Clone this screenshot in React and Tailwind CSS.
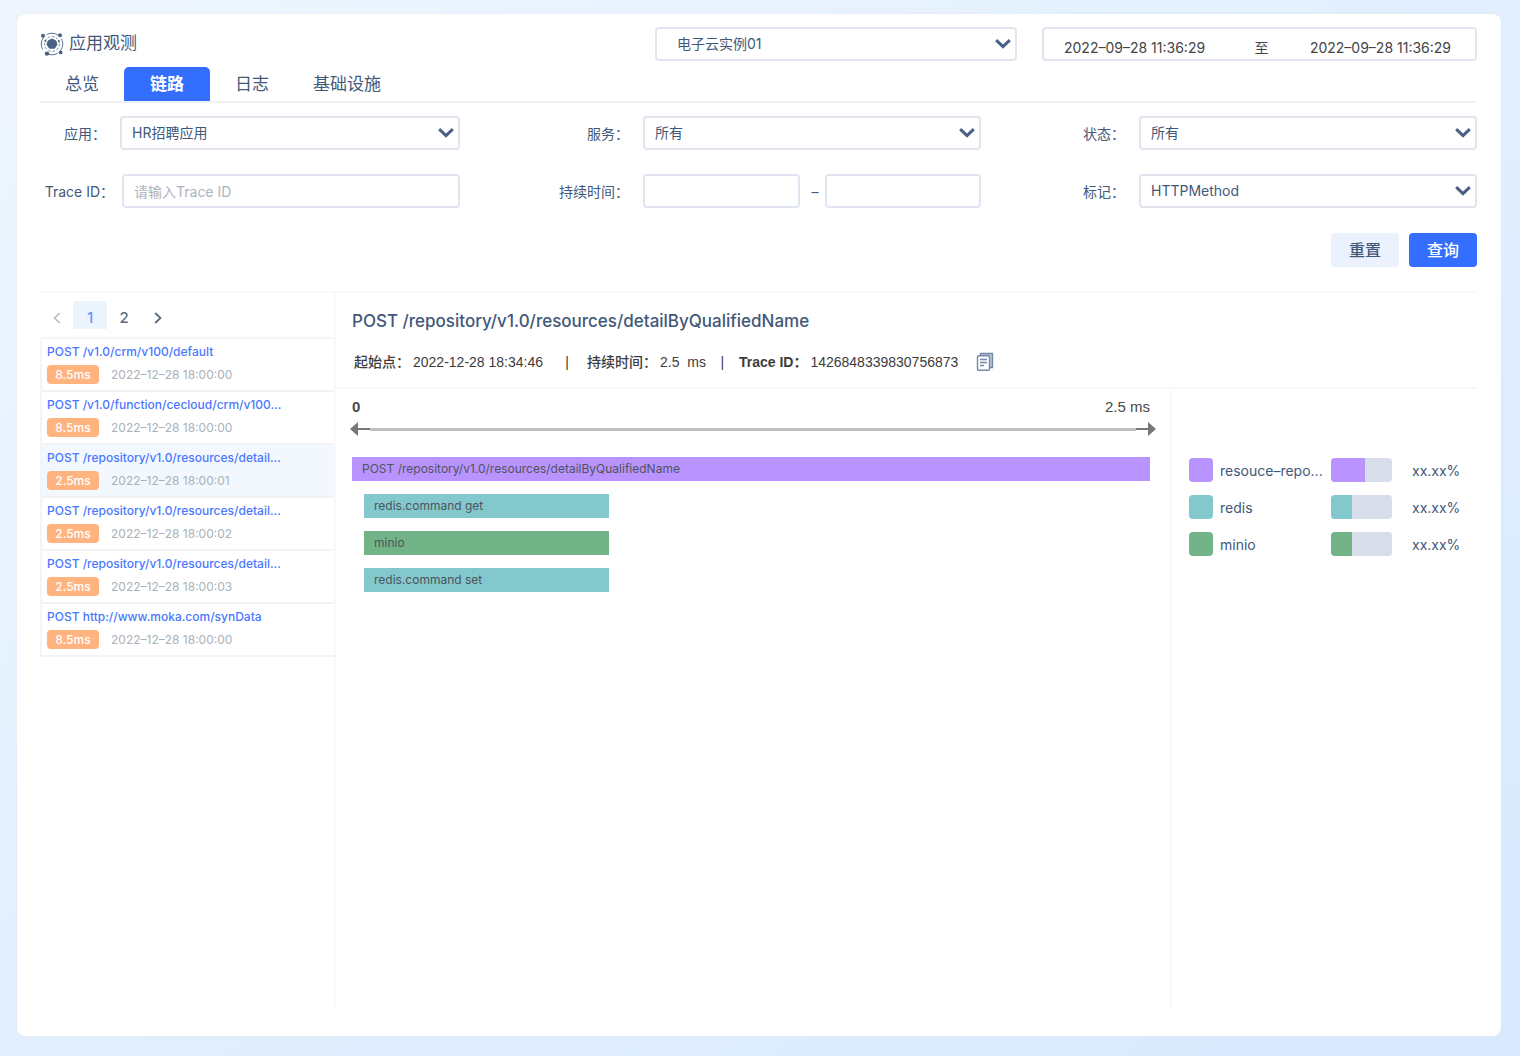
import React from "react";

const traces = [
  { id: 1, name: "POST /v1.0/crm/v100/default", cost: "8.5ms", time: "2022–12–28 18:00:00" },
  { id: 2, name: "POST /v1.0/function/cecloud/crm/v100...", cost: "8.5ms", time: "2022–12–28 18:00:00" },
  { id: 3, name: "POST /repository/v1.0/resources/detail...", cost: "2.5ms", time: "2022–12–28 18:00:01", active: true },
  { id: 4, name: "POST /repository/v1.0/resources/detail...", cost: "2.5ms", time: "2022–12–28 18:00:02" },
  { id: 5, name: "POST /repository/v1.0/resources/detail...", cost: "2.5ms", time: "2022–12–28 18:00:03" },
  { id: 6, name: "POST http://www.moka.com/synData", cost: "8.5ms", time: "2022–12–28 18:00:00" },
];

const spans = [
  { id: 1, name: "POST /repository/v1.0/resources/detailByQualifiedName", color: "bg-[#b993ff]", width: 100 },
  { id: 2, name: "redis.command get", color: "bg-[#82c8cc]", width: 30.7, child: true },
  { id: 3, name: "minio", color: "bg-[#73b388]", width: 30.7, child: true },
  { id: 4, name: "redis.command set", color: "bg-[#82c8cc]", width: 30.7, child: true },
];

const services = [
  { name: "resouce–repo...", color: "bg-[#b993ff]", share: 56 },
  { name: "redis", color: "bg-[#82c8cc]", share: 35 },
  { name: "minio", color: "bg-[#73b388]", share: 35 },
];

function Logo() {
  return (
    <svg viewBox="0 0 24 24" className="size-6 text-[#4a6184]" fill="none" stroke="currentColor" aria-hidden="true">
      <circle cx="12" cy="12" r="10.8" strokeWidth="0.9" strokeDasharray="13 4" strokeDashoffset="6" />
      <circle cx="12" cy="12" r="7.4" strokeWidth="0.7" strokeDasharray="2.5 1.8" />
      <path d="M12 7 15.8 8.8l1.2 3.6-2.4 3.8H9.4L7 12.4l1.2-3.6Z" fill="currentColor" strokeWidth="1" strokeLinejoin="round" />
      <g fill="currentColor" stroke="none">
        <circle cx="3" cy="3.8" r="2" />
        <circle cx="20" cy="3.2" r="2" />
        <circle cx="7" cy="21.6" r="2.2" />
        <circle cx="20.6" cy="20.4" r="1.9" />
        <circle cx="5.4" cy="9" r="1.1" />
        <circle cx="18.8" cy="9" r="1.1" />
      </g>
    </svg>
  );
}

function CopyIcon() {
  return (
    <svg viewBox="0 0 18 20" className="h-5 w-[18px] text-[#7489a8]" fill="none" stroke="currentColor" strokeWidth="1.4" aria-hidden="true">
      <path d="M4.5 3.5v-2h12v14h-2.5" fill="#b9c6d8" />
      <rect x="1.5" y="3.8" width="12" height="14.5" rx="1" fill="#fff" />
      <path d="M4 7.5h7M4 10.5h7M4 13.5h4" />
    </svg>
  );
}

function Select({ id, value, className = "pl-[10px]", label }) {
  return (
    <div className="relative min-w-0 flex-1">
      <select
        id={id}
        aria-label={label}
        className={`h-[34px] w-full appearance-none rounded-[4px] border-2 border-[#e4e3ee] bg-white pr-9 pb-[2px] text-[14px] text-[#42587a] outline-none ${className}`}
      >
        <option>{value}</option>
      </select>
      <svg viewBox="0 0 16 10" className="pointer-events-none absolute top-3 right-[6px] h-[10px] w-4 text-[#4a6184]" fill="none" stroke="currentColor" strokeWidth="3" aria-hidden="true">
        <path d="M1.2 1.2 8 7.6l6.8-6.4" />
      </svg>
    </div>
  );
}

function Field({ id, label, labelClass, children }) {
  return (
    <div className="flex min-w-0 items-center">
      <label htmlFor={id} className={`shrink-0 text-right text-[14px] whitespace-nowrap ${labelClass}`}>
        {label}
      </label>
      {children}
    </div>
  );
}

const inputClass =
  "h-[34px] min-w-0 rounded-[4px] border-2 border-[#e0e5f1] bg-white px-[10px] text-[14px] outline-none placeholder:text-[#abb4be]";

export default function App() {
  return (
    <div className="flex min-h-screen bg-linear-to-br from-[#eff6ff] via-[#e1effe] to-[#d9e9fe] pt-[14px] pr-[19px] pb-5 pl-[17px] font-['Inter','Noto_Sans_CJK_SC',sans-serif] text-[#42587a]">
      <main className="flex flex-1 flex-col rounded-lg bg-white pt-[13px] pr-6 pb-7 pl-[23px] shadow-[0_0_2px_#e5e5e5]">
        <header className="flex items-center">
          <Logo />
          <h1 className="ml-[5px] flex-1 text-[17px]">应用观测</h1>
          <div className="flex w-[362px]">
            <Select label="实例" value="电子云实例01" className="pl-5" />
          </div>
          <div className="ml-[25px] flex h-[34px] w-[435px] items-center rounded-[4px] border-2 border-[#e4e3ee] pt-[6px] pr-6 pl-5 text-[14px] text-[#444]">
            <time>2022–09–28 11:36:29</time>
            <span className="flex-1 pl-2 text-center">至</span>
            <time>2022–09–28 11:36:29</time>
          </div>
        </header>

        <nav className="mt-[6px] flex border-b-2 border-[#eff2f3] text-[17px] leading-[34px]">
          <button className="px-[25px]">总览</button>
          <button className="rounded-t-[5px] bg-[#346eff] px-[26px] font-bold text-white">链路</button>
          <button className="px-[25px]">日志</button>
          <button className="px-[19px]">基础设施</button>
        </nav>

        <form className="mt-[13px]" onSubmit={(e) => e.preventDefault()}>
          <div className="grid grid-cols-[minmax(0,420fr)_minmax(0,441fr)_minmax(0,416fr)] gap-x-20 gap-y-6">
            <Field id="app" label="应用：" labelClass="w-20 pr-[14px]">
              <Select id="app" value="HR招聘应用" />
            </Field>
            <Field id="service" label="服务：" labelClass="w-[103px] pr-[14px]">
              <Select id="service" value="所有" />
            </Field>
            <Field id="status" label="状态：" labelClass="w-[78px] pr-[14px]">
              <Select id="status" value="所有" />
            </Field>
            <Field id="trace" label="Trace ID：" labelClass="w-[82px] pr-2">
              <input id="trace" placeholder="请输入Trace ID" className={`flex-1 ${inputClass}`} />
            </Field>
            <Field id="min" label="持续时间：" labelClass="w-[103px] pr-[14px]">
              <div className="flex min-w-0 flex-1 items-center">
                <input id="min" className={`flex-1 ${inputClass}`} />
                <span className="w-[25px] pl-[6px] text-center text-[14px]">–</span>
                <input aria-label="最长持续时间" className={`flex-1 ${inputClass}`} />
              </div>
            </Field>
            <Field id="tag" label="标记：" labelClass="w-[78px] pr-[14px]">
              <Select id="tag" value="HTTPMethod" />
            </Field>
          </div>
          <div className="mt-[25px] flex justify-end gap-[10px] text-[16px] font-medium">
            <button type="reset" className="h-[34px] w-[68px] rounded-[4px] bg-[#ebf2fd]">重置</button>
            <button type="submit" className="h-[34px] w-[68px] rounded-[4px] bg-[#346eff] text-white">查询</button>
          </div>
        </form>

        <div className="mt-6 flex flex-1 border-t-2 border-[#f9f9f9]">
          <aside className="w-[296px] shrink-0 border-r-2 border-[#f9f9f9]">
            <nav aria-label="分页" className="flex py-2 text-[15px] font-medium text-[#5b6b80]">
              <button aria-label="上一页" className="flex h-7 w-[33px] items-center justify-center pt-[6px] text-[#b3bcc9]">
                <svg viewBox="0 0 8 12" className="h-3 w-2" fill="none" stroke="currentColor" strokeWidth="1.6"><path d="M6.8 1 1.5 6l5.3 5" /></svg>
              </button>
              <button className="h-7 w-[34px] bg-[#ecf4fe] pt-[6px] leading-[22px] text-[#5f98fb]">1</button>
              <button className="h-7 w-[34px] pt-[6px] leading-[22px]">2</button>
              <button aria-label="下一页" className="flex h-7 w-[34px] items-center justify-center pt-[6px]">
                <svg viewBox="0 0 8 12" className="h-3 w-2" fill="none" stroke="currentColor" strokeWidth="1.8"><path d="M1.2 1 6.5 6l-5.3 5" /></svg>
              </button>
            </nav>
            <ul className="border-t-2 border-l-2 border-[#f5f5f5]">
              {traces.map((t) => (
                <li key={t.id} className={`h-[53px] border-b-2 border-[#f3f3f3] pt-[3px] pl-[5px] ${t.active ? "bg-[#f3f8ff]" : ""}`}>
                  <a href="#trace" className="block text-[12px] leading-5 font-medium whitespace-nowrap text-[#4a77ff]">{t.name}</a>
                  <div className="mt-[3px] flex items-center gap-3 text-[12px]">
                    <span className="h-[19px] w-[52px] rounded-[4px] bg-[#ffb37f] text-center leading-[19px] font-medium text-white">{t.cost}</span>
                    <time className="leading-[18px] text-[#a9b1ba]">{t.time}</time>
                  </div>
                </li>
              ))}
            </ul>
          </aside>

          <section className="flex flex-1 flex-col">
            <div className="border-b-2 border-[#f8f8f8] pt-[14px] pb-3 pl-4">
              <h2 className="text-[17px] leading-7 font-medium">POST /repository/v1.0/resources/detailByQualifiedName</h2>
              <div className="mt-[14px] flex h-[26px] items-center pl-[2px] font-['Liberation_Sans','Noto_Sans_CJK_SC',sans-serif] text-[14px] whitespace-pre text-[#3c3c3c]">
                <span className="font-medium">起始点：</span>
                <span className="ml-[3px]">2022-12-28 18:34:46</span>
                <span className="w-11 pl-1 text-center">|</span>
                <span className="font-medium">持续时间：</span>
                <span className="ml-[3px]">2.5  ms</span>
                <span className="w-[33px] text-center">|</span>
                <span className="font-bold">Trace ID：</span>
                <span className="ml-[3px]">1426848339830756873</span>
                <button aria-label="复制" className="ml-[18px]"><CopyIcon /></button>
              </div>
            </div>

            <div className="flex flex-1">
              <div className="flex-1 border-r-2 border-[#f9f9f9] pt-[6px] pr-5 pl-4">
                <div className="flex justify-between font-['Liberation_Sans',sans-serif] text-[15px] leading-6 text-[#4a4a4a]">
                  <span className="font-bold">0</span>
                  <span>2.5 ms</span>
                </div>
                <div className="mt-[2px] -mr-[6px] -ml-[2px] flex items-center">
                  <svg viewBox="0 0 20 16" className="h-4 w-5 shrink-0 text-[#777]" fill="currentColor" aria-hidden="true"><path d="M0 8 8 1v14ZM8 7h12v2H8Z" /></svg>
                  <div className="h-[3px] flex-1 bg-[#bfbfbf]" />
                  <svg viewBox="0 0 20 16" className="h-4 w-5 shrink-0 text-[#777]" fill="currentColor" aria-hidden="true"><path d="M20 8 12 1v14ZM12 7H0v2h12Z" /></svg>
                </div>
                <ul className="mt-5 flex flex-col gap-[13px] text-[12px] leading-6 text-[#4f545c]">
                  {spans.map((s) => (
                    <li
                      key={s.id}
                      className={`h-6 pl-[10px] whitespace-nowrap ${s.color} ${s.child ? "ml-3" : ""}`}
                      style={{ width: `${s.width}%` }}
                    >
                      {s.name}
                    </li>
                  ))}
                </ul>
              </div>

              <ul className="flex w-[305px] flex-col gap-[13px] pt-[69px] pl-[17px] text-[14px]">
                {services.map((s) => (
                  <li key={s.name} className="flex h-6 items-center">
                    <span className={`size-6 rounded-[4px] ${s.color}`} />
                    <span className="ml-[7px] w-[111px] whitespace-nowrap">{s.name}</span>
                    <span className="flex h-6 w-[61px] overflow-hidden rounded-[4px] bg-[#d8ddea]">
                      <span className={s.color} style={{ width: `${s.share}%` }} />
                    </span>
                    <span className="ml-5">xx.xx%</span>
                  </li>
                ))}
              </ul>
            </div>
          </section>
        </div>
      </main>
    </div>
  );
}
